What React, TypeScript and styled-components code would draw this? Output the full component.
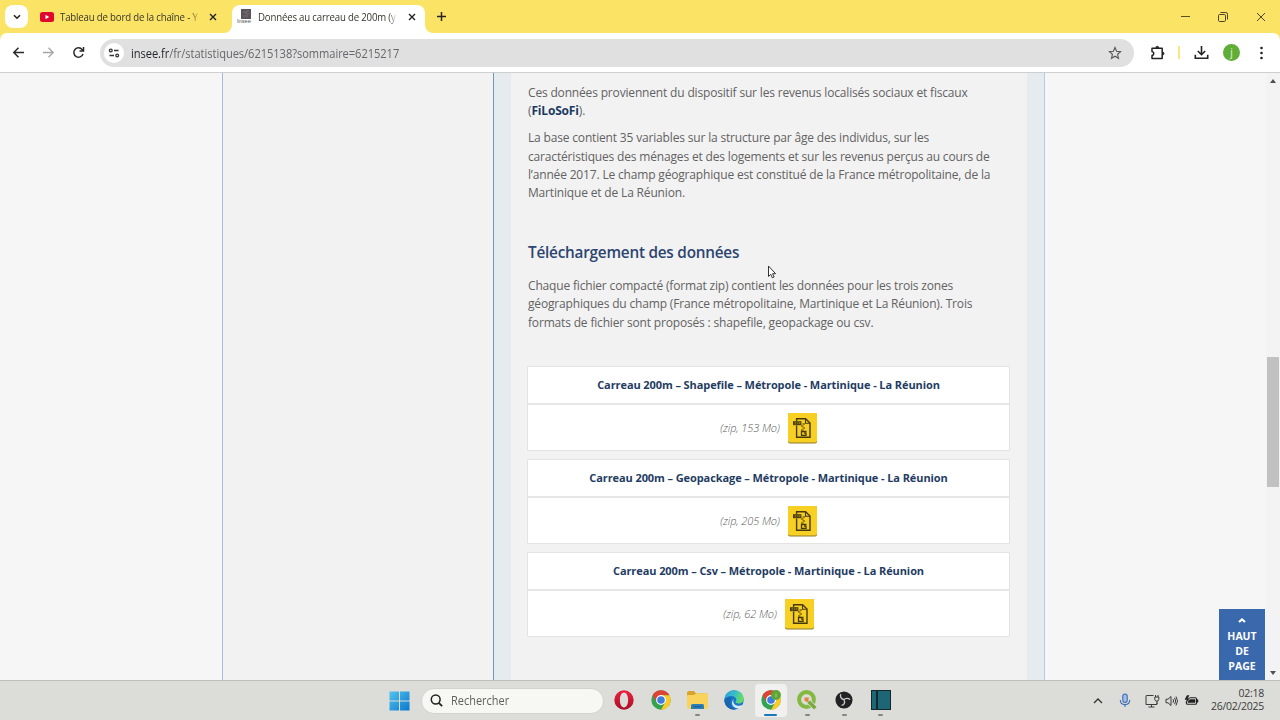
import React from 'react';
import styled, { createGlobalStyle } from 'styled-components';

const GlobalStyle = createGlobalStyle`
  * {
    box-sizing: border-box;
  }
  body {
    margin: 0;
    overflow: hidden;
    font-family: 'Open Sans', 'Noto Sans', sans-serif;
  }
  svg {
    display: block;
    flex: none;
  }
`;

const Screen = styled.div`
  display: flex;
  flex-direction: column;
  width: 1280px;
  height: 720px;
  overflow: hidden;
  background: #fbe465;
`;

/* Browser tabs */

const TabStrip = styled.div`
  display: flex;
  align-items: flex-start;
  height: 33px;
  flex: none;
  padding-left: 5px;
  background: #fbe465;
`;

const TabSearch = styled.div`
  display: flex;
  align-items: center;
  justify-content: center;
  width: 23px;
  height: 23px;
  margin-top: 5px;
  border-radius: 8px;
  background: #fff;
`;

const Tab = styled.div<{ $active?: boolean }>`
  position: relative;
  display: flex;
  align-items: center;
  width: ${(p) => (p.$active ? 193 : 204)}px;
  height: 28px;
  margin-top: 5px;
  padding: 0 ${(p) => (p.$active ? 9.5 : 15)}px 5px ${(p) => (p.$active ? 5 : 12)}px;
  border-radius: 8px 8px 0 0;
  background: ${(p) => (p.$active ? '#fff' : 'transparent')};
`;

const TabFoot = styled.svg<{ $right?: boolean }>`
  position: absolute;
  bottom: 0;
  ${(p) => (p.$right ? 'right: -8px; transform: scaleX(-1);' : 'left: -8px;')}
`;

const TabTitle = styled.div`
  flex: none;
  width: 156px;
  margin: 0 -18px 0 6px;
  white-space: nowrap;
  font-size: 10.8px;
  line-height: 16px;
  letter-spacing: -0.2px;
  color: #37352a;
  transform: scaleX(0.893);
  transform-origin: left center;
  mask-image: linear-gradient(to right, #000 94%, transparent);
`;

const TabClose = styled.div`
  margin-left: auto;
`;

const NewTab = styled.div`
  margin: 11px 0 0 11px;
`;

const WindowButtons = styled.div`
  display: flex;
  align-items: center;
  gap: 27px;
  height: 33px;
  margin-left: auto;
  padding-right: 14px;
`;

/* Address bar */

const Toolbar = styled.div`
  display: flex;
  align-items: center;
  flex: none;
  height: 40px;
  padding: 0 10px 0 11px;
  border-bottom: 1px solid #cfcfcf;
  border-radius: 7px 7px 0 0;
  background: #fff;
`;

const NavIcons = styled.div`
  display: flex;
  gap: 15px;
  width: 89px;
`;

const AddressBar = styled.div`
  display: flex;
  align-items: center;
  flex: none;
  width: 1034px;
  height: 28px;
  padding: 0 12px 0 4px;
  border-radius: 14px;
  background: #e0e0e0;
`;

const SiteInfo = styled.div`
  display: flex;
  align-items: center;
  justify-content: center;
  width: 20px;
  height: 20px;
  border-radius: 50%;
  background: #fff;
`;

const Url = styled.div`
  flex: 1;
  margin: 1px 0 0 7px;
  font-size: 11.8px;
  line-height: 18px;
  letter-spacing: -0.06px;
  white-space: nowrap;
  color: #66676a;
  transform: scaleX(0.942);
  transform-origin: left center;

  span {
    color: #25262a;
  }
`;

const ToolbarActions = styled.div`
  display: flex;
  align-items: center;
  margin-left: auto;
`;

const Separator = styled.div`
  width: 2px;
  height: 13px;
  margin: 0 14px 0 12px;
  background: #fbe77d;
`;

const Avatar = styled.div`
  width: 17px;
  height: 17px;
  margin: 0 13px 0 14px;
  border-radius: 50%;
  background: #60ad38;
  color: #e4f2dc;
  font-size: 10px;
  line-height: 16px;
  text-align: center;
`;

/* Page */

const Viewport = styled.div`
  display: flex;
  flex: none;
  height: 607px;
  background: #f6f6f7;
`;

const LeftMargin = styled.div`
  width: 223px;
  border-right: 1px solid #a9b8db;
  background: #f6f6f7;
`;

const Sommaire = styled.div`
  width: 271px;
  border-right: 1px solid #7296bd;
  background: #f2f2f2;
`;

const Article = styled.div`
  width: 551px;
  padding: 11px 34px 0 17px;
  border-left: 17px solid #e6ebf0;
  border-right: 1px solid #b7cadf;
  background: linear-gradient(to right, #f2f2f2 516px, #e6ebf0 516px);
`;

const Paragraph = styled.div`
  margin-bottom: 8.4px;
`;

const Line = styled.div`
  height: 18.4px;
  font-size: 12px;
  line-height: 18.4px;
  letter-spacing: -0.17px;
  white-space: nowrap;
  color: #626262;

  b {
    color: #1b3a62;
  }
`;

const Heading = styled.h2`
  margin: 37px 0 13.3px;
  font-size: 15.3px;
  font-weight: 600;
  line-height: 24px;
  letter-spacing: -0.22px;
  white-space: nowrap;
  color: #2c4570;
`;

const Downloads = styled.div`
  display: flex;
  flex-direction: column;
  gap: 8px;
  width: 483px;
  margin: 34px 0 0 -1px;
`;

const Download = styled.div`
  height: 85px;
  border: 1px solid #e3e3e3;
  border-radius: 1px;
  background: #fff;
`;

const DownloadTitle = styled.div`
  height: 38px;
  border-bottom: 2px solid #e6e6e6;
  font-size: 11px;
  font-weight: 700;
  line-height: 36px;
  letter-spacing: -0.09px;
  text-align: center;
  white-space: nowrap;
  color: #1f3c63;
`;

const DownloadBody = styled.div`
  display: flex;
  align-items: center;
  justify-content: center;
  gap: 8px;
  height: 46px;
`;

const FileInfo = styled.span`
  margin-top: -1px;
  font-size: 11px;
  font-style: italic;
  font-weight: 300;
  letter-spacing: -0.1px;
  color: #5c5c5c;
`;

const RightMargin = styled.div`
  display: flex;
  align-items: flex-end;
  justify-content: flex-end;
  width: 221px;
  padding-right: 1px;
`;

const BackToTop = styled.div`
  display: flex;
  flex-direction: column;
  align-items: center;
  width: 46px;
  height: 71px;
  padding-top: 9px;
  background: #3a68ad;
  color: #fff;
  font-size: 10.5px;
  font-weight: 700;
  line-height: 15px;
  text-align: center;

  svg {
    margin-bottom: 6px;
  }
`;

const Scrollbar = styled.div`
  display: flex;
  flex-direction: column;
  align-items: center;
  width: 14px;
  padding: 6px 0 5px;
  background: #f3f3f3;
`;

const Thumb = styled.div`
  width: 12px;
  height: 130px;
  margin: 274px 0 auto;
  background: #c1c1c1;
`;

const Cursor = styled.svg`
  position: absolute;
  left: 767px;
  top: 265px;
`;

/* Windows taskbar */

const Taskbar = styled.div`
  display: flex;
  align-items: center;
  flex: none;
  height: 40px;
  padding: 0 16px 0 389px;
  border-top: 1px solid #bdbdbb;
  background: #dcddd8;
`;

const SearchBox = styled.div`
  display: flex;
  align-items: center;
  gap: 8px;
  width: 183px;
  height: 26px;
  margin: 0 9px 0 11px;
  padding-left: 8px;
  border: 1px solid #d2d3ce;
  border-radius: 13px;
  background: #f7f8f4;
`;

const SearchLabel = styled.span`
  margin-top: -1px;
  color: #5f5f5d;
  font-size: 11.8px;
  transform: scaleX(0.93);
  transform-origin: left center;
`;

const Apps = styled.div`
  display: flex;
  gap: 4.7px;
  margin-left: -5px;
`;

const AppButton = styled.div<{ $active?: boolean }>`
  display: flex;
  flex-direction: column;
  align-items: center;
  width: 32px;
  height: 33px;
  padding-top: 6px;
  border-radius: 4px;
  background: ${(p) => (p.$active ? '#f0f1ee' : 'transparent')};
`;

const Indicator = styled.div<{ $active?: boolean }>`
  width: ${(p) => (p.$active ? 13 : 5)}px;
  height: 2.5px;
  margin-top: 3.5px;
  border-radius: 2px;
  background: ${(p) => (p.$active ? '#1c77b8' : '#858681')};
`;

const Tray = styled.div`
  display: flex;
  align-items: center;
  margin-left: auto;
`;

const TrayIcon = styled.svg<{ $gap: number }>`
  margin-left: ${(p) => p.$gap}px;
`;

const Clock = styled.div`
  width: 65px;
  margin-top: -1px;
  font-size: 10.5px;
  line-height: 13.5px;
  letter-spacing: -0.27px;
  text-align: right;
  white-space: nowrap;
  color: #3b3b3a;
`;

const CloseIcon = () => (
  <svg width="8" height="8" viewBox="0 0 8 8" stroke="#222" strokeWidth="1.4">
    <path d="M1 1l6 6M7 1L1 7" />
  </svg>
);

const Foot = ({ right }: { right?: boolean }) => (
  <TabFoot $right={right} width="8" height="8" viewBox="0 0 8 8">
    <path d="M8 0v8H0a8 8 0 0 0 8-8z" fill="#fff" />
  </TabFoot>
);

const ZipIcon = () => (
  <svg width="29" height="31" viewBox="0 0 29 31" fill="none">
    <rect width="29" height="30.500" rx="2" fill="#8f7a26" />
    <rect width="29" height="29.500" rx="2" fill="#f8d024" />
    <g stroke="#463a0c" strokeWidth="1.400">
      <path d="M8.600 8V5.800h9L22 10v14.300H8.600V12.500" />
      <path d="M17.500 6v4.200H22" strokeWidth="1.100" />
      <path d="M14.500 11h2.500M13 13h2.500M14.500 15h2.500M13 17h2.500" strokeWidth="1.200" />
      <path d="M18.500 18.500h-5v3.800h4.500v-2.200h-2" strokeWidth="1.300" />
    </g>
    <rect x="5" y="8.200" width="8.400" height="4" fill="#463a0c" />
    <path d="M6.500 9.300h1.500l-1.400 1.900h1.500M9.500 9.100v2.200M11 11.300v-2h1.200v1.100H11" stroke="#b99b27" strokeWidth=".5" />
  </svg>
);

const ChromeIcon = ({ badge }: { badge?: boolean }) => (
  <svg width="20" height="20" viewBox="0 0 20 20">
    <circle cx="10" cy="10" r="9.700" fill="#34a350" />
    <path d="M1.600 5.150A9.700 9.700 0 0 1 18.400 5.150H10L5.800 12.400z" fill="#db4437" />
    <path d="M18.400 5.150A9.700 9.700 0 0 1 10 19.700L14.200 12.400 10 5.150z" fill="#fbc928" />
    <circle cx="10" cy="10" r="4.900" fill="#fff" />
    <circle cx="10" cy="10" r="3.800" fill="#3b7de0" />
    {badge && (
      <>
        <circle cx="15" cy="5" r="5" fill="#5fa637" />
        <path d="M15 3.500v3.800" stroke="#a4d287" strokeWidth="1" />
      </>
    )}
  </svg>
);

const OperaIcon = () => (
  <svg width="20" height="20" viewBox="0 0 20 20">
    <defs>
      <linearGradient id="opera" x1="0" y1="0" x2="0" y2="1">
        <stop stopColor="#ef1f3e" />
        <stop offset="1" stopColor="#a90d27" />
      </linearGradient>
    </defs>
    <path
      fillRule="evenodd"
      fill="url(#opera)"
      d="M10 .3a9.700 9.700 0 1 0 0 19.400A9.700 9.700 0 0 0 10 .3zm0 2.300c2.500 0 4.100 3.200 4.100 7.400s-1.600 7.400-4.100 7.400S5.900 14.200 5.900 10 7.500 2.600 10 2.600z"
    />
  </svg>
);

const FolderIcon = () => (
  <svg width="21" height="20" viewBox="0 0 21 20">
    <path d="M0 3q0-2 2-2h5l2 2.500h10q2 0 2 2V8H0z" fill="#d9a32a" />
    <path d="M0 6q0-1 1-1h6l2-1.500h10.500Q21 3.500 21 5v12q0 2-2 2H2q-2 0-2-2z" fill="#f9d35b" />
    <path d="M4 19v-3.500q0-1.500 1.500-1.500h10q1.500 0 1.500 1.500V19z" fill="#2b7fb8" />
    <path d="M6.500 16.700h8" stroke="#175987" strokeWidth="1" />
  </svg>
);

const EdgeIcon = () => (
  <svg width="20" height="20" viewBox="0 0 20 20">
    <defs>
      <linearGradient id="edge" x1="0" y1="0" x2="1" y2=".3">
        <stop stopColor="#279fda" />
        <stop offset=".55" stopColor="#38bdc9" />
        <stop offset="1" stopColor="#64dc68" />
      </linearGradient>
    </defs>
    <circle cx="10" cy="10" r="9.700" fill="#1a76c6" />
    <path d="M.3 9.500C.8 4 5 .3 10.200.3c5.500 0 9.500 4 9.500 8.300 0 3.200-2.300 5-5 5-2.500 0-3.200-.8-3.200-1.500 0-.6.800-1 .8-2.300 0-1.800-1.900-3.700-5-3.700C4.200 6.100 1.600 7.300.3 9.500z" fill="url(#edge)" />
    <path d="M10 9c-1.500 2-.6 5 2 6.200 2.500 1 5 .6 7-.5-.9 1.700-2 2.900-3.300 3.600-2.500.6-5.200-.3-6.700-2.300-1.700-2.300-1.200-5.300 1-7z" fill="#dcebee" />
    <path d="M7.600 7.900c-3 4-1.800 9.200 3.500 11.500C5 20.500.5 15.500.3 10c1.500-2.300 4.600-3 7.300-2.100z" fill="#1b65ae" />
  </svg>
);

const QgisIcon = () => (
  <svg width="20" height="20" viewBox="0 0 20 20" fill="none">
    <circle cx="9.500" cy="9.500" r="7.400" stroke="#84b941" strokeWidth="4" />
    <path d="M11 11l8 8" stroke="#dcddd8" strokeWidth="5" />
    <path d="M11.500 11.500l6.800 6.800" stroke="#77ac3c" strokeWidth="3.400" />
    <path d="M7.500 7.500h4.500l-1 4.500-3.500-1z" fill="#e58142" />
  </svg>
);

const ObsIcon = () => (
  <svg width="18" height="20" viewBox="0 0 20 20" fill="none">
    <circle cx="10" cy="10" r="9.500" fill="#222224" />
    <path d="M6.300 3.500c-.8 3 .4 5.400 3.700 6.200M16.800 9.500c-2.500-2-5.300-1.700-6.800.2M7.200 16c3.200-.7 4.300-3 2.800-6.300" stroke="#c9c9c9" strokeWidth="1.500" />
  </svg>
);

const files = [
  { title: 'Carreau 200m – Shapefile – Métropole - Martinique - La Réunion', info: '(zip, 153 Mo)' },
  { title: 'Carreau 200m – Geopackage – Métropole - Martinique - La Réunion', info: '(zip, 205 Mo)' },
  { title: 'Carreau 200m – Csv – Métropole - Martinique - La Réunion', info: '(zip, 62 Mo)' },
];

const apps = [
  { icon: <OperaIcon /> },
  { icon: <ChromeIcon /> },
  { icon: <FolderIcon />, open: true },
  { icon: <EdgeIcon /> },
  { icon: <ChromeIcon badge />, open: true, active: true },
  { icon: <QgisIcon />, open: true },
  { icon: <ObsIcon />, open: true },
  {
    icon: (
      <svg width="20" height="20" viewBox="0 0 20 20">
        <rect width="20" height="20" fill="#14272d" />
        <path d="M1 1h4v18H1zM7 1h12v18H7z" fill="#1d6675" />
      </svg>
    ),
    open: true,
  },
];

const BrowserTabs = () => (
  <TabStrip>
    <TabSearch>
      <svg width="8" height="6" viewBox="0 0 8 6" fill="none" stroke="#222" strokeWidth="1.600">
        <path d="M1 1.200l3 3 3-3" />
      </svg>
    </TabSearch>
    <Tab>
      <svg width="14" height="10" viewBox="0 0 14 10">
        <rect width="14" height="10" rx="2.500" fill="#e0082c" />
        <path d="M5.500 2.800v4.400L9.200 5z" fill="#fff" />
      </svg>
      <TabTitle>Tableau de bord de la chaîne - Y</TabTitle>
      <TabClose><CloseIcon /></TabClose>
    </Tab>
    <Tab $active>
      <Foot />
      <svg width="15" height="15" viewBox="0 0 15 15">
        <rect x="4" width="10" height="10" fill="#59545a" />
        <path d="M6 3h3v2h3M6 7h5M9 2h3" stroke="#8d777d" fill="none" strokeWidth=".8" />
        <text x="0" y="14.300" fontSize="5.800" fontFamily="Liberation Sans, sans-serif" fill="#555" textLength="14">Insee</text>
      </svg>
      <TabTitle>Données au carreau de 200m (y</TabTitle>
      <TabClose><CloseIcon /></TabClose>
      <Foot right />
    </Tab>
    <NewTab>
      <svg width="11" height="11" viewBox="0 0 11 11" stroke="#28261a" strokeWidth="1.500">
        <path d="M5.500 1v9M1 5.500h9" />
      </svg>
    </NewTab>
    <WindowButtons>
      <svg width="11" height="10" viewBox="0 0 11 10" stroke="#5a5129" strokeWidth="1"><path d="M1 4.500h9" /></svg>
      <svg width="11" height="10" viewBox="0 0 11 10" fill="none" stroke="#4b4426" strokeWidth="1">
        <rect x=".5" y="2.500" width="7" height="7" rx="1.200" />
        <path d="M2.500.500h5.300q1.700 0 1.700 1.700v5.300" />
      </svg>
      <svg width="10" height="10" viewBox="0 0 10 10" stroke="#4b4426" strokeWidth="1"><path d="M1 1l8 8M9 1L1 9" /></svg>
    </WindowButtons>
  </TabStrip>
);

const BrowserToolbar = () => (
  <Toolbar>
    <NavIcons>
      <svg width="15" height="15" viewBox="0 0 15 15" fill="none" stroke="#292929" strokeWidth="1.500"><path d="M13 7.500H3M7.500 2.800L2.800 7.500l4.700 4.700" /></svg>
      <svg width="15" height="15" viewBox="0 0 15 15" fill="none" stroke="#a5a5a5" strokeWidth="1.300"><path d="M2 7.500h10M7.500 2.800l4.700 4.700-4.700 4.700" /></svg>
      <svg width="15" height="15" viewBox="0 0 15 15" fill="none" stroke="#292929" strokeWidth="1.500"><path d="M12 9a4.700 4.700 0 1 1-.8-4.400L12.300 6M12.500 2v4h-4" /></svg>
    </NavIcons>
    <AddressBar>
      <SiteInfo>
        <svg width="12" height="10" viewBox="0 0 12 10" fill="none" stroke="#333" strokeWidth="1.300">
          <circle cx="2.800" cy="2.500" r="1.400" />
          <path d="M6 2.500h4.500M1.500 7.500H6" />
          <circle cx="9.200" cy="7.500" r="1.400" />
        </svg>
      </SiteInfo>
      <Url><span>insee.fr</span>/fr/statistiques/6215138?sommaire=6215217</Url>
      <svg width="14" height="14" viewBox="0 0 14 14" fill="none" stroke="#555" strokeWidth="1.100">
        <path d="M7 1.500l1.600 3.700 4 .4-3 2.700.9 4L7 10.200l-3.500 2.100.9-4-3-2.700 4-.4z" />
      </svg>
    </AddressBar>
    <ToolbarActions>
      <svg width="17" height="16" viewBox="0 0 17 16" fill="none" stroke="#222" strokeWidth="1.500">
        <path d="M3 3.200h10.200v10.400H3v-3.200c2.400-.3 2.400-3.700 0-4z" strokeLinejoin="round" />
        <path d="M6.800 2.800a1.500 1.500 0 0 1 3 0zM13.500 7a1.500 1.500 0 0 1 0 3z" fill="#222" strokeWidth=".8" />
      </svg>
      <Separator />
      <svg width="15" height="15" viewBox="0 0 15 15" fill="none" stroke="#222" strokeWidth="1.600">
        <path d="M7.500 1v8.500M3.800 6l3.700 3.700L11.200 6M1.300 9.800v3.400h12.400V9.800" />
      </svg>
      <Avatar>j</Avatar>
      <svg width="17" height="14" viewBox="0 0 17 14" fill="#222">
        <circle cx="8.500" cy="2" r="1.300" />
        <circle cx="8.500" cy="7" r="1.300" />
        <circle cx="8.500" cy="12" r="1.300" />
      </svg>
    </ToolbarActions>
  </Toolbar>
);

const InseePage = () => (
  <Viewport>
    <LeftMargin />
    <Sommaire />
    <Article>
      <Paragraph>
        <Line>Ces données proviennent du dispositif sur les revenus localisés sociaux et fiscaux</Line>
        <Line>(<b>FiLoSoFi</b>).</Line>
      </Paragraph>
      <Paragraph>
        <Line>La base contient 35 variables sur la structure par âge des individus, sur les</Line>
        <Line>caractéristiques des ménages et des logements et sur les revenus perçus au cours de</Line>
        <Line>l’année 2017. Le champ géographique est constitué de la France métropolitaine, de la</Line>
        <Line>Martinique et de La Réunion.</Line>
      </Paragraph>
      <Heading>Téléchargement des données</Heading>
      <Paragraph>
        <Line>Chaque fichier compacté (format zip) contient les données pour les trois zones</Line>
        <Line>géographiques du champ (France métropolitaine, Martinique et La Réunion). Trois</Line>
        <Line>formats de fichier sont proposés : shapefile, geopackage ou csv.</Line>
      </Paragraph>
      <Downloads>
        {files.map((file) => (
          <Download key={file.title}>
            <DownloadTitle>{file.title}</DownloadTitle>
            <DownloadBody>
              <FileInfo>{file.info}</FileInfo>
              <ZipIcon />
            </DownloadBody>
          </Download>
        ))}
      </Downloads>
    </Article>
    <RightMargin>
      <BackToTop>
        <svg width="8" height="5" viewBox="0 0 8 5" fill="none" stroke="#fff" strokeWidth="2.200"><path d="M1 4l3-2.500L7 4" /></svg>
        HAUT<br />DE<br />PAGE
      </BackToTop>
    </RightMargin>
    <Scrollbar>
      <svg width="6" height="4" viewBox="0 0 6 4" fill="#505050"><path d="M0 4l3-4 3 4z" /></svg>
      <Thumb />
      <svg width="6" height="4" viewBox="0 0 6 4" fill="#505050"><path d="M0 0l3 4 3-4z" /></svg>
    </Scrollbar>
    <Cursor width="10" height="14" viewBox="0 0 10 14">
      <path d="M1.500 1v10.500l2.300-2.200 1.500 3.500 1.800-.8-1.500-3.300h3z" fill="#fff" stroke="#333" strokeWidth="1" />
    </Cursor>
  </Viewport>
);

const WindowsTaskbar = () => (
  <Taskbar>
    <svg width="21" height="20" viewBox="0 0 21 20">
      <defs>
        <linearGradient id="win" x1="0" y1="0" x2="1" y2="1">
          <stop stopColor="#55c3ee" />
          <stop offset="1" stopColor="#0a78cd" />
        </linearGradient>
      </defs>
      <path d="M.5.500H10v9H.5zM11 .5h9.500v9H11zM.5 10.500H10v9H.5zM11 10.500h9.500v9H11z" fill="url(#win)" />
    </svg>
    <SearchBox>
      <svg width="13" height="13" viewBox="0 0 13 13" fill="none" stroke="#222" strokeWidth="1.500">
        <circle cx="5.700" cy="5.500" r="4.400" />
        <path d="M8.800 8.800l3.300 3.400" strokeWidth="1.800" />
      </svg>
      <SearchLabel>Rechercher</SearchLabel>
    </SearchBox>
    <Apps>
      {apps.map((app, index) => (
        <AppButton key={index} $active={app.active}>
          {app.icon}
          {app.open && <Indicator $active={app.active} />}
        </AppButton>
      ))}
    </Apps>
    <Tray>
      <svg width="10" height="6" viewBox="0 0 10 6" fill="none" stroke="#333" strokeWidth="1.300"><path d="M1 5l4-4 4 4" /></svg>
      <TrayIcon $gap={16} width="12" height="15" viewBox="0 0 12 15" fill="none" stroke="#3f6bb5" strokeWidth="1.100">
        <rect x="3.800" y="1" width="4.400" height="8.500" rx="2.200" fill="#a5c0e4" />
        <path d="M1.300 7c0 6.200 9.400 6.200 9.400 0M6 11.500V14" />
      </TrayIcon>
      <TrayIcon $gap={14} width="15" height="14" viewBox="0 0 15 14" fill="none" stroke="#3b3b3b" strokeWidth="1">
        <path d="M8.500 1.500h-7q-.5 0-.5.500v8.500h11V8.500M6.500 10.500v2.500M3.500 13h6M10.500 1v2M13 1v2M9.800 3h4v2.500q0 1.500-2 1.500t-2-1.500zM12 7v3" />
      </TrayIcon>
      <TrayIcon $gap={5} width="13" height="12" viewBox="0 0 13 12" fill="none" stroke="#3b3b3b" strokeWidth="1">
        <path d="M1 4.200h2L6 1.500v9L3 7.800H1zM8 4.200q1.300 1.800 0 3.600M9.600 2.800q2.200 3.200 0 6.400M11 1.500q3 4.500 0 9" />
      </TrayIcon>
      <TrayIcon $gap={6} width="15" height="12" viewBox="0 0 15 12" fill="none" stroke="#222" strokeWidth="1.100">
        <path d="M5.500 2.800h6q1 0 1 1v4.400q0 1-1 1h-8q-1 0-1-1V7" />
        <path d="M6 4.500h5v3H4V6.300zM13 4.700h1v2.500h-1zM3 .5L1 4.500h2L2 7.500l3.500-4H3.500L5 .5z" fill="#222" strokeWidth=".5" />
      </TrayIcon>
      <Clock>
        02:18
        <br />
        26/02/2025
      </Clock>
    </Tray>
  </Taskbar>
);

const App = () => {
  return (
    <Screen>
      <GlobalStyle />
      <BrowserTabs />
      <BrowserToolbar />
      <InseePage />
      <WindowsTaskbar />
    </Screen>
  );
};

export default App;
